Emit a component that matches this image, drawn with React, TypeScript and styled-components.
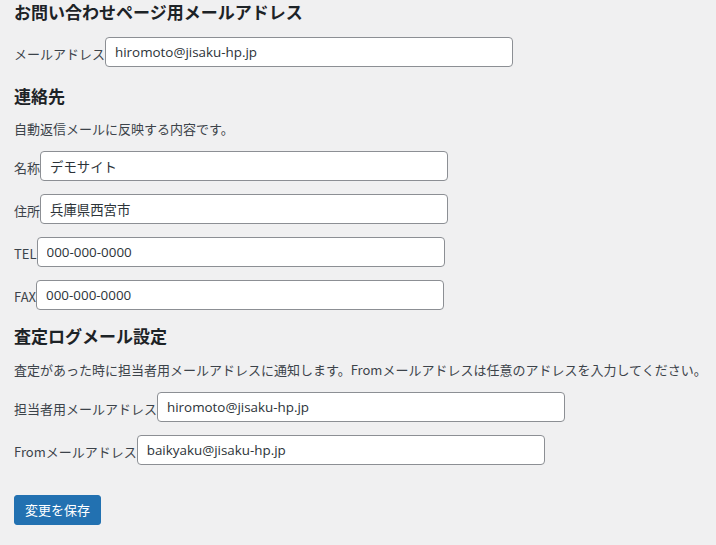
import React from 'react'
import styled, { createGlobalStyle } from 'styled-components'

const GlobalStyle = createGlobalStyle`
	html, body {
		margin: 0;
		padding: 0;
		background: #f0f0f1;
	}
	body {
		font-family: "Noto Sans CJK JP", "Noto Sans", sans-serif;
		font-size: 13px;
		color: #3c434a;
	}
`

interface FieldProps {
	label: string
	value: string
}

const fields1: FieldProps[] = [{ label: 'メールアドレス', value: 'hiromoto@jisaku-hp.jp' }]

const fields2: FieldProps[] = [
	{ label: '名称', value: 'デモサイト' },
	{ label: '住所', value: '兵庫県西宮市' },
	{ label: 'TEL', value: '000-000-0000' },
	{ label: 'FAX', value: '000-000-0000' },
]

const fields3: FieldProps[] = [
	{ label: '担当者用メールアドレス', value: 'hiromoto@jisaku-hp.jp' },
	{ label: 'Fromメールアドレス', value: 'baikyaku@jisaku-hp.jp' },
]

function Field({ label, value }: FieldProps) {
	return (
		<Row>
			<Label>{label}</Label>
			<TextInput type="text" defaultValue={value} />
		</Row>
	)
}

export default function App() {
	return (
		<>
			<GlobalStyle />
			<Page>
				<Section $top={0}>
					<Heading>お問い合わせページ用メールアドレス</Heading>
					{fields1.map((f) => (
						<Field key={f.label} {...f} />
					))}
				</Section>
				<Section $top={17}>
					<Heading>連絡先</Heading>
					<Description $top={11}>自動返信メールに反映する内容です。</Description>
					{fields2.map((f) => (
						<Field key={f.label} {...f} />
					))}
				</Section>
				<Section $top={14}>
					<Heading>査定ログメール設定</Heading>
					<Description $top={12}>
						査定があった時に担当者用メールアドレスに通知します。Fromメールアドレスは任意のアドレスを入力してください。
					</Description>
					{fields3.map((f) => (
						<Field key={f.label} {...f} />
					))}
				</Section>
				<SubmitButton type="button">変更を保存</SubmitButton>
			</Page>
		</>
	)
}

const Page = styled.div`
	padding: 0 14px 20px;
	display: flex;
	flex-direction: column;
	align-items: flex-start;
`

const Section = styled.section<{ $top: number }>`
	display: flex;
	flex-direction: column;
	margin-top: ${({ $top }) => $top}px;
`

const Heading = styled.h2`
	margin: 0;
	font-size: 17px;
	line-height: 24px;
	font-weight: 700;
	color: #1d2327;
`

const Description = styled.p<{ $top: number }>`
	margin: ${({ $top }) => $top}px 0 0;
	line-height: 19px;
	white-space: nowrap;
`

const Row = styled.div`
	display: flex;
	align-items: center;
	margin-top: 13px;
	height: 30px;
`

const Label = styled.label`
	font-size: 13px;
	line-height: 19px;
	padding-top: 2px;
	white-space: nowrap;
`

const TextInput = styled.input`
	box-sizing: border-box;
	width: 408px;
	height: 30px;
	margin: 0;
	padding: 0 8px 0 9px;
	border: 1px solid #8c8f94;
	border-radius: 4px;
	background: #fff;
	color: #2c3338;
	font-family: "Open Sans", "Noto Sans CJK JP", sans-serif;
	font-size: 13.4px;
	outline: none;
`

const SubmitButton = styled.button`
	margin-top: 30px;
	height: 30px;
	padding: 0 10px;
	border: 1px solid #2271b1;
	border-radius: 3px;
	background: #2271b1;
	color: #fff;
	font-family: "Noto Sans CJK JP", sans-serif;
	font-size: 13px;
	line-height: 28px;
	cursor: pointer;
`
